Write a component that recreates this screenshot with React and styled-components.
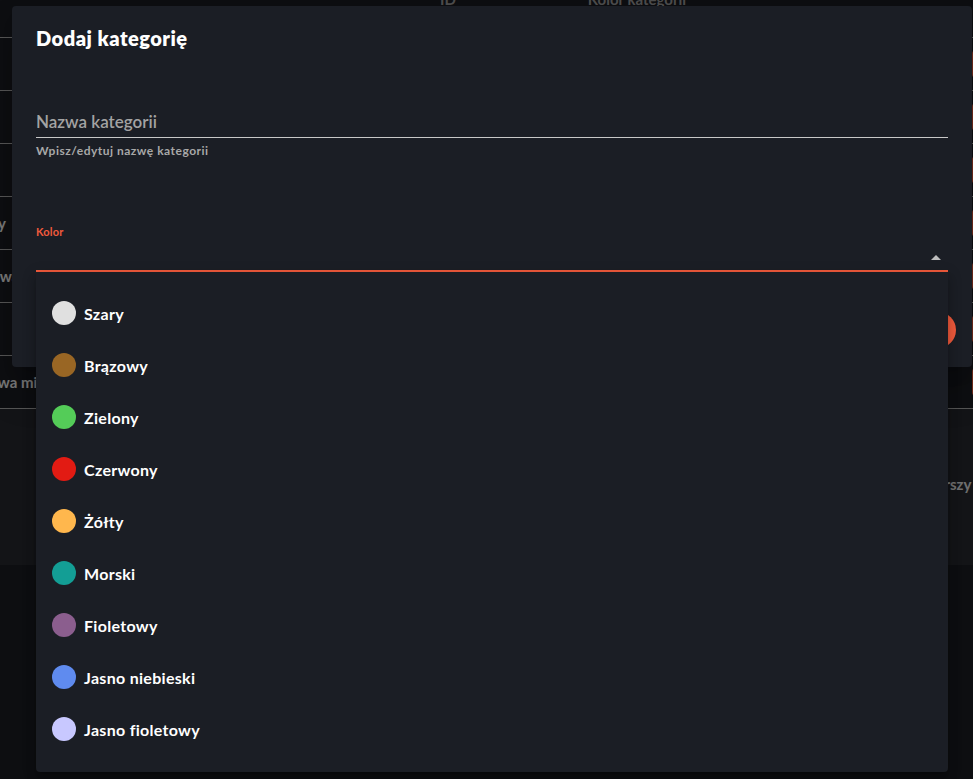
import React from "react";
import styled, { createGlobalStyle } from "styled-components";

const GlobalStyle = createGlobalStyle`
  html, body {
    margin: 0;
    padding: 0;
    background: #1b1c22;
    font-family: "Lato", "Liberation Sans", sans-serif;
    overflow: hidden;
  }
`;

const colors = [
  { name: "Szary", hex: "#e0e0e0" },
  { name: "Brązowy", hex: "#996624" },
  { name: "Zielony", hex: "#54cc58" },
  { name: "Czerwony", hex: "#e21b13" },
  { name: "Żółty", hex: "#ffb74d" },
  { name: "Morski", hex: "#139e95" },
  { name: "Fioletowy", hex: "#8b5e8e" },
  { name: "Jasno niebieski", hex: "#5f8bef" },
  { name: "Jasno fioletowy", hex: "#c8c8ff" },
];

// rows of the category table behind the dialog
const rows = [
  { label: "", shift: 0 },
  { label: "", shift: 0 },
  { label: "", shift: 0 },
  { label: "Inny", shift: -23 },
  { label: "Nowa", shift: -20 },
  { label: "", shift: 0 },
  { label: "Nowa minimalna", shift: -22 },
];

const App = () => {
  return (
    <Page>
      <GlobalStyle />
      <Table>
        <HeadRow>
          <HeadCell>ID</HeadCell>
          <HeadCell>Kolor kategorii</HeadCell>
        </HeadRow>
        {rows.map((r, i) => (
          <Row key={i}>
            <Cell $shift={r.shift}>{r.label}</Cell>
            <RowButton />
          </Row>
        ))}
        <Footer>
          <FooterText>Wierszy na stronę</FooterText>
        </Footer>
      </Table>

      <Overlay />

      <Dialog>
        <Title>Dodaj kategorię</Title>
        <Content>
          <Field>
            <Input placeholder="Nazwa kategorii" />
            <Helper>Wpisz/edytuj nazwę kategorii</Helper>
          </Field>
          <SelectField>
            <SelectLabel>Kolor</SelectLabel>
            <SelectBox>
              <Arrow />
            </SelectBox>
            <Menu>
              {colors.map((c) => (
                <MenuItem key={c.name}>
                  <Dot $color={c.hex} />
                  <ItemText>{c.name}</ItemText>
                </MenuItem>
              ))}
            </Menu>
          </SelectField>
        </Content>
        <Actions>
          <Fab />
        </Actions>
      </Dialog>
    </Page>
  );
};

export default App;

const Page = styled.div`
  position: relative;
  width: 973px;
  height: 779px;
  overflow: hidden;
`;

const Table = styled.div`
  display: flex;
  flex-direction: column;
`;

const HeadRow = styled.div`
  height: 37px;
  display: flex;
  gap: 132px;
  padding-left: 440px;
  border-bottom: 1px solid #aaa;
`;

const HeadCell = styled.div`
  color: #999;
  font-weight: 700;
  font-size: 15px;
  margin-top: -10px;
`;

const Row = styled.div`
  height: 52px;
  display: flex;
  align-items: center;
  justify-content: space-between;
  border-bottom: 1px solid #aaa;
`;

const Cell = styled.div`
  color: #eee;
  font-weight: 700;
  font-size: 15px;
  margin-left: ${(p) => p.$shift}px;
`;

const RowButton = styled.div`
  width: 28px;
  height: 28px;
  border-radius: 4px;
  background: #e35533;
  margin-right: -27px;
`;

const Footer = styled.div`
  height: 156px;
  background: #27292f;
  display: flex;
  justify-content: flex-end;
  align-items: center;
`;

const FooterText = styled.div`
  color: #ddd;
  font-weight: 700;
  font-size: 15px;
  margin-right: -64px;
  margin-top: -6px;
`;

const Overlay = styled.div`
  position: absolute;
  inset: 0;
  background: rgba(0, 0, 0, 0.5);
`;

const Dialog = styled.div`
  position: absolute;
  top: 6px;
  left: 12px;
  width: 960px;
  height: 361px;
  box-sizing: border-box;
  background: #1b1e25;
  border-radius: 4px;
  display: flex;
  flex-direction: column;
  box-shadow: 0 11px 15px -7px rgba(0, 0, 0, 0.2), 0 24px 38px 3px rgba(0, 0, 0, 0.14);
`;

const Title = styled.h2`
  margin: 0;
  padding: 20px 24px 0;
  font-size: 20px;
  line-height: 24px;
  font-weight: 800;
  letter-spacing: 0.5px;
  color: #fff;
`;

const Content = styled.div`
  padding: 0 24px;
  display: flex;
  flex-direction: column;
`;

const Field = styled.div`
  margin-top: 56px;
  display: flex;
  flex-direction: column;
`;

const Input = styled.input`
  height: 31px;
  padding: 0;
  border: 0;
  border-bottom: 1px solid #c8c8c8;
  background: transparent;
  font-family: inherit;
  font-size: 17px;
  font-weight: 600;
  color: #fff;
  outline: none;
  &::placeholder {
    color: #a3a3a3;
  }
`;

const Helper = styled.div`
  margin-top: 6px;
  font-size: 12px;
  line-height: 14px;
  font-weight: 700;
  letter-spacing: 0.5px;
  color: #a8a8a8;
`;

const SelectField = styled.div`
  position: relative;
  margin-top: 67px;
  display: flex;
  flex-direction: column;
`;

const SelectLabel = styled.div`
  font-size: 11px;
  line-height: 14px;
  font-weight: 700;
  letter-spacing: 0.2px;
  color: #f05a3c;
`;

const SelectBox = styled.div`
  height: 31px;
  border-bottom: 2px solid #f05a3c;
  display: flex;
  align-items: center;
  justify-content: flex-end;
  padding-right: 7px;
`;

const Arrow = styled.div`
  width: 0;
  height: 0;
  border-left: 5px solid transparent;
  border-right: 5px solid transparent;
  border-bottom: 5px solid #bdbdbd;
  margin-top: 5px;
`;

const Menu = styled.div`
  position: absolute;
  top: 100%;
  left: 0;
  right: 0;
  z-index: 10;
  padding: 15px 0 17px;
  background: #1b1e25;
  border-radius: 0 0 4px 4px;
  display: flex;
  flex-direction: column;
  box-shadow: 0 5px 5px -3px rgba(0, 0, 0, 0.2), 0 8px 10px 1px rgba(0, 0, 0, 0.14),
    0 3px 14px 2px rgba(0, 0, 0, 0.12);
`;

const MenuItem = styled.div`
  height: 52px;
  display: flex;
  align-items: center;
  gap: 8px;
  padding-left: 16px;
`;

const Dot = styled.span`
  width: 24px;
  height: 24px;
  border-radius: 50%;
  background: ${(p) => p.$color};
  flex-shrink: 0;
`;

const ItemText = styled.span`
  font-size: 16px;
  font-weight: 700;
  letter-spacing: 0.3px;
  color: #fff;
`;

const Actions = styled.div`
  margin-top: auto;
  padding: 0 16px 19px;
  display: flex;
  justify-content: flex-end;
`;

const Fab = styled.div`
  width: 36px;
  height: 36px;
  border-radius: 50%;
  background: #f05a3c;
`;
